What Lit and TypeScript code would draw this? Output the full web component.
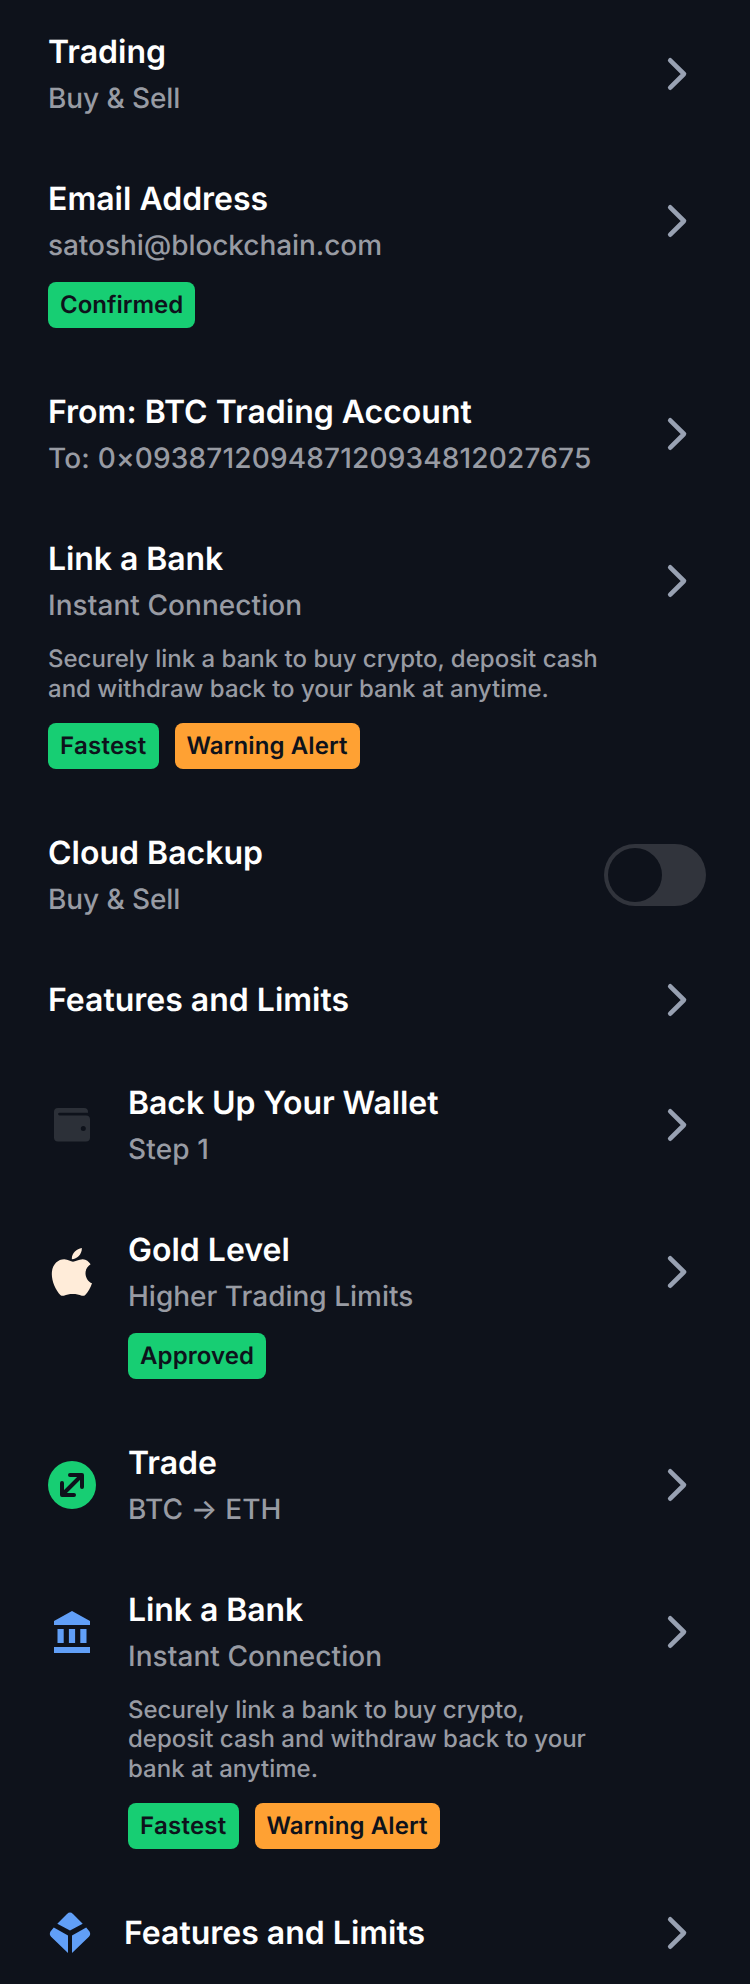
import { LitElement, html, css, svg, nothing } from "lit";
import { customElement, property } from "lit/decorators.js";
import { styleMap } from "lit/directives/style-map.js";

type Label = { text: string; tracking?: number };
type Tag = Label & { tone: "success" | "warning" };
type Row = {
  title: Label;
  subtitle?: Label;
  body?: string;
  tags?: Tag[];
  icon?: string;
  toggle?: boolean;
};

const bankTitle: Label = { text: "Link a Bank", tracking: -0.08 };
const bankSubtitle: Label = { text: "Instant Connection", tracking: 0.06 };
const bankBody =
  "Securely link a bank to buy crypto, deposit cash and withdraw back to your bank at anytime.";
const bankTags: Tag[] = [
  { text: "Fastest", tone: "success", tracking: 0.26 },
  { text: "Warning Alert", tone: "warning", tracking: 0.1 },
];
const buySell: Label = { text: "Buy & Sell", tracking: -0.1 };

const rows: Row[] = [
  { title: { text: "Trading" }, subtitle: buySell },
  {
    title: { text: "Email Address" },
    subtitle: { text: "satoshi@blockchain.com", tracking: -0.06 },
    tags: [{ text: "Confirmed", tone: "success" }],
  },
  {
    title: { text: "From: BTC Trading Account" },
    subtitle: { text: "To: 0×093871209487120934812027675", tracking: 0.17 },
  },
  { title: bankTitle, subtitle: bankSubtitle, body: bankBody, tags: bankTags },
  { title: { text: "Cloud Backup" }, subtitle: buySell, toggle: true },
  { title: { text: "Features and Limits" } },
  {
    title: { text: "Back Up Your Wallet", tracking: -0.07 },
    subtitle: { text: "Step 1", tracking: 0.15 },
    icon: "wallet",
  },
  {
    title: { text: "Gold Level" },
    subtitle: { text: "Higher Trading Limits" },
    tags: [{ text: "Approved", tone: "success", tracking: 0.1 }],
    icon: "apple",
  },
  { title: { text: "Trade" }, subtitle: { text: "BTC → ETH", tracking: 0.12 }, icon: "trade" },
  { title: bankTitle, subtitle: bankSubtitle, body: bankBody, tags: bankTags, icon: "bank" },
  { title: { text: "Features and Limits" }, icon: "blockchain" },
];

const icons: Record<string, unknown> = {
  wallet: svg`<path fill="#2c3038" fill-rule="evenodd" d="M10 7H36a4 4 0 0 1 4 4V11.700H11.500a1.150 1.150 0 0 0 0 2.800H38a4 4 0 0 1 4 4V36.500a4 4 0 0 1-4 4H10a4 4 0 0 1-4-4V11a4 4 0 0 1 4-4ZM35.300 25a2.500 2.500 0 1 0 0 5a2.500 2.500 0 1 0 0-5Z"/>`,
  apple: svg`<path fill="#ffecd9" d="M34 0C34.500 5.600 29.600 11.200 24.100 11.200C23.500 5.800 28.700 .6 34 0ZM42.800 16.300C39.900 18.100 37.700 21.200 37.700 25.200C37.700 29.900 40.500 33.800 44.200 35.300C42.900 39.400 40.200 44.500 37.200 47.200C36.400 47.900 35.200 48 34 47.700C31 46.700 28.700 46.100 25 46.100C21.300 46.100 19 46.700 16 47.700C14.800 48 13.600 47.900 12.800 47.200C7.800 42.300 4 33.500 4 26C4 16.800 9.900 11.300 16.500 11.300C20.300 11.300 22.800 13.700 25.200 13.700C27.500 13.700 30.800 11.200 35 11.200C38.400 11.400 41.100 13.500 42.800 16.300Z" transform="translate(-.2 0)"/>`,
  trade: svg`<circle cx="24" cy="24" r="24" fill="#17ce73"/><path d="M22 14H34V26M14 22V34H26M15 33L33 15" fill="none" stroke="#0e121b" stroke-width="4" stroke-linecap="round" stroke-linejoin="round"/>`,
  bank: svg`<path fill="#619ff7" d="M24 3L42 13V17H6V13ZM9.500 21H15.700V35H9.500ZM20.900 21H27.100V35H20.900ZM32.300 21H38.500V35H32.300ZM6 39H42V45H6Z"/>`,
  blockchain: svg`<path fill="#619ff7" d="M19 2.900a4.400 4.400 0 0 1 6 0L34.700 12.700L22 19.500L9.300 12.700ZM5.800 16.500L20 24.500V42L3.100 25.700a4.400 4.400 0 0 1-.6-5.200ZM38.200 16.500L41.500 20.500a4.400 4.400 0 0 1-.6 5.200L24 42V24.500Z"/>`,
};

@customElement("list-row")
class ListRow extends LitElement {
  @property({ attribute: false }) row!: Row;

  static styles = css`
    :host {
      display: flex;
      align-items: flex-start;
      padding: 32px 44px 32px 48px;
      box-sizing: border-box;
    }
    .lead {
      display: flex;
      align-items: center;
      flex: none;
      width: 48px;
      height: 84px;
      margin: 0 32px -1px 0;
    }
    .lead.single {
      width: 44px;
      height: 40px;
      margin-bottom: -2px;
    }
    .lead svg {
      flex: none;
      width: 48px;
      height: 48px;
    }
    .lead.single svg {
      width: 44px;
      height: 44px;
    }
    .content {
      flex: 1;
      min-width: 0;
    }
    .title {
      font-size: 32px;
      font-weight: 600;
      line-height: 39px;
      color: #fff;
    }
    .subtitle {
      margin-top: 10px;
      font-size: 28px;
      font-weight: 500;
      line-height: 34px;
      color: #989ba3;
      white-space: nowrap;
    }
    .body {
      margin-top: 22px;
      font-size: 24px;
      font-weight: 500;
      line-height: 29.5px;
      color: #989ba3;
    }
    .lead + .content .body {
      margin-top: 21.5px;
    }
    .tags {
      display: flex;
      gap: 16px;
      margin-top: 20px;
    }
    .tag {
      height: 46px;
      padding: 0 12px;
      border-radius: 8px;
      font-size: 24px;
      font-weight: 600;
      line-height: 46px;
      color: #0e121b;
    }
    .success {
      background: #17ce73;
    }
    .warning {
      background: #ffa133;
    }
    .trail {
      display: flex;
      align-items: center;
      justify-content: flex-end;
      flex: none;
      width: 102px;
      height: 84px;
      margin-bottom: -1px;
    }
    .trail.single {
      height: 40px;
    }
    .chevron {
      flex: none;
      width: 48px;
      height: 48px;
      margin-right: 6px;
    }
    .toggle {
      width: 102px;
      height: 62px;
      border-radius: 31px;
      background: #31343c;
      padding: 4px;
      box-sizing: border-box;
    }
    .knob {
      width: 54px;
      height: 54px;
      border-radius: 50%;
      background: #0e121b;
    }
  `;

  private label(name: string, label: Label) {
    const style = label.tracking ? { letterSpacing: `${label.tracking}px` } : {};
    return html`<div class=${name} style=${styleMap(style)}>${label.text}</div>`;
  }

  render() {
    const { title, subtitle, body, tags, icon, toggle } = this.row;
    const single = subtitle ? "" : "single";
    const box = single ? "0 0 44 44" : "0 0 48 48";
    return html`
      ${icon
        ? html`<div class="lead ${single}"><svg viewBox=${box}>${icons[icon]}</svg></div>`
        : nothing}
      <div class="content">
        ${this.label("title", title)}
        ${subtitle ? this.label("subtitle", subtitle) : nothing}
        ${body ? html`<div class="body">${body}</div>` : nothing}
        ${tags
          ? html`<div class="tags">${tags.map((t) => this.label(`tag ${t.tone}`, t))}</div>`
          : nothing}
      </div>
      <div class="trail ${single}">
        ${toggle
          ? html`<div class="toggle"><div class="knob"></div></div>`
          : html`<svg class="chevron" viewBox="0 0 48 48">
              <path
                d="M18.200 10.300L32 24L18.200 37.700"
                fill="none"
                stroke="#98a1b2"
                stroke-width="4.600"
                stroke-linecap="round"
                stroke-linejoin="round"
              />
            </svg>`}
      </div>
    `;
  }
}

@customElement("app-root")
class AppRoot extends LitElement {
  static styles = css`
    :host {
      display: block;
      width: 750px;
      height: 1984px;
      overflow: hidden;
      background: #0e121b;
      font-family: Inter, "Liberation Sans", sans-serif;
      text-rendering: geometricPrecision;
    }
  `;

  render() {
    return html`${rows.map((row) => html`<list-row .row=${row}></list-row>`)}`;
  }
}
